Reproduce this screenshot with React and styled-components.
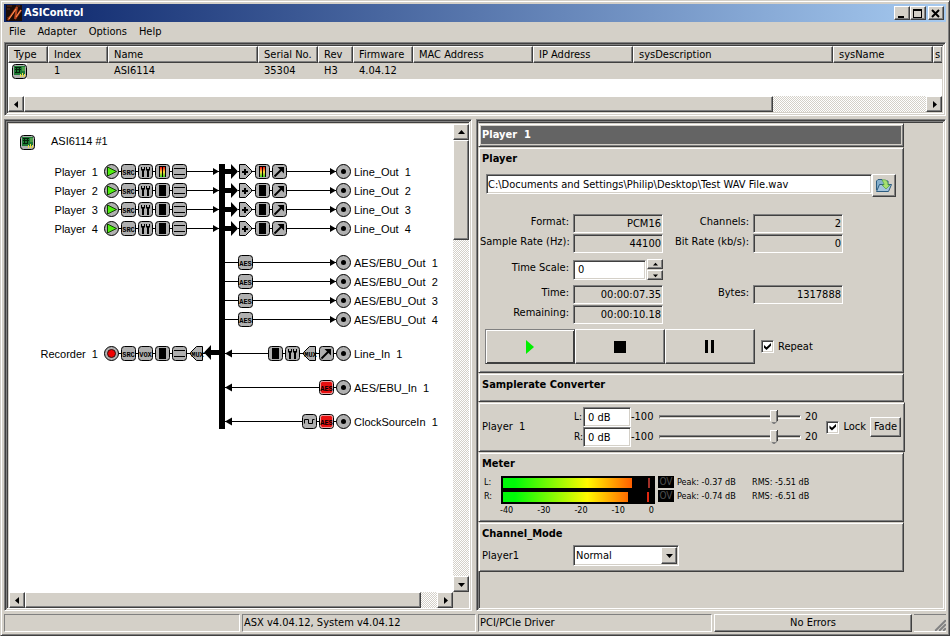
import React, { useState } from 'react';
import styled, { createGlobalStyle, css } from 'styled-components';

const FACE = '#d4d0c8';
const SHADOW = '#808080';
const DARK = '#404040';

const COLUMNS = [
  { title: 'Type', width: 40 },
  { title: 'Index', width: 60, value: '1' },
  { title: 'Name', width: 150, value: 'ASI6114' },
  { title: 'Serial No.', width: 60, value: '35304' },
  { title: 'Rev', width: 35, value: 'H3' },
  { title: 'Firmware', width: 60, value: '4.04.12' },
  { title: 'MAC Address', width: 120 },
  { title: 'IP Address', width: 100 },
  { title: 'sysDescription', width: 200 },
  { title: 'sysName', width: 100 },
  { title: 's' }
];

const PLAYERS = [1, 2, 3, 4];

const METERS = [
  { name: 'L', level: 129, peak: 147, peakText: '-0.37 dB', rmsText: '-5.51 dB', color: '#a03028' },
  { name: 'R', level: 125, peak: 146, peakText: '-0.74 dB', rmsText: '-6.51 dB', color: '#e02810' }
];

/* ---------- icons ---------- */

const Logo = () => (
  <svg width="16" height="16" viewBox="0 0 16 16" aria-hidden="true">
    <rect width="16" height="16" fill="#1c0c08" />
    <path d="M1 1h5M10 1h4M1 4h3M1 13l4-2" stroke="#6a2c18" />
    <path d="M2 15L11 2L9 14L15 5" fill="none" stroke="#b8421c" strokeWidth="2" />
    <path d="M3 14L10 4M10 12L15 5" stroke="#ff9858" />
  </svg>
);

const Card = ({ x = 0, y = 0 }) => (
  <g transform={`translate(${x} ${y})`}>
    <rect x="0.5" y="0.5" width="14" height="14" rx="3" fill="#b0b0b0" stroke="#000" />
    <path d="M2 2h11v9H2z" fill="#1d7a34" />
    <path d="M3 3.500h6M3 5.500h6M3 8.500h5M4.500 3v6M7.500 3v6" stroke="#04200a" />
    <path d="M10 3h3v4h-3z" fill="#4f9f4a" />
    <path d="M8.500 10v3M10.500 9v4M12.500 10v3" stroke="#f0e040" />
  </g>
);

const Tile = () => <rect x="-7" y="-7" width="14" height="14" rx="3" fill="#b0b0b0" stroke="#000" />;

const TileText = ({ children, x = 0 }) => (
  <text x={x} y="3" textAnchor="middle" fontFamily="Liberation Mono, monospace" fontSize="7" fontWeight="bold">
    {children}
  </text>
);

const Block = ({ kind, x, y, live }) => (
  <g transform={`translate(${x} ${y})`}>
    {kind === 'play' && (
      <>
        <circle r="7" fill="#b0b0b0" stroke="#000" />
        <path d="M-4 -4.500L5 0L-4 4.500z" fill="#50f010" stroke="#104000" />
      </>
    )}
    {kind === 'record' && (
      <>
        <circle r="7" fill="#b0b0b0" stroke="#000" />
        <circle r="4" fill="#f00000" stroke="#301010" />
      </>
    )}
    {kind === 'jack' && (
      <>
        <circle r="7" fill="#b0b0b0" stroke="#000" />
        <circle r="2.500" />
      </>
    )}
    {(kind === 'SRC' || kind === 'VOX' || kind === 'AES') && (
      <>
        <Tile />
        {live && (
          <rect x="-6" y="-6" width="12" height="12" rx="2" fill="#e81010" stroke="#e8a0a0" />
        )}
        <TileText>{kind}</TileText>
      </>
    )}
    {kind === 'volume' && (
      <>
        <Tile />
        <path d="M-3.500 -0.500h2v6h-2zM1.500 -0.500h2v6h-2z" />
        <path d="M-4.500 -4.500h1v2h2v-2h1v3l-1 1h-2l-1 -1zM0.500 -4.500h1v2h2v-2h1v3l-1 1h-2l-1 -1z" />
      </>
    )}
    {kind === 'meter' && (
      <>
        <Tile />
        <rect x="-3.500" y="-5.500" width="7" height="11" />
        {live && (
          <>
            <rect x="-2.500" y="-4.500" width="2" height="10" fill="url(#level)" />
            <rect x="0.500" y="-4.500" width="2" height="10" fill="url(#level)" />
          </>
        )}
      </>
    )}
    {kind === 'mode' && (
      <>
        <Tile />
        <path d="M-5.500 -3h11M-5.500 3h11" stroke="#000" />
      </>
    )}
    {kind === 'mixer' && (
      <>
        <path d="M-6 -7h6L6 -1V1L0 7h-6z" fill="#b0b0b0" stroke="#000" />
        <path d="M-3.500 -0.500h6v2h-6zM-1.500 -2.500h2v6h-2z" />
      </>
    )}
    {kind === 'adjust' && (
      <>
        <Tile />
        <path d="M-5 5L2 -2" stroke="#000" strokeWidth="2" />
        <path d="M-2 -4.500h6.500v6.500z" />
      </>
    )}
    {kind === 'mux' && (
      <>
        <path d="M6 -7h-6L-6 -1V1L0 7h6z" fill="#b0b0b0" stroke="#000" />
        <TileText x={1}>MUX</TileText>
      </>
    )}
    {kind === 'clock' && (
      <>
        <Tile />
        <path d="M-5 2V-2H-1V2H3V-2H5" fill="none" stroke="#000" />
      </>
    )}
  </g>
);

const Wire = ({ from, to, y }) => <path d={`M${from} ${y}H${to}`} stroke="#000" />;

const Tip = ({ x, y, left }) => (
  <path d={left ? `M${x} ${y}l7 -4v8z` : `M${x} ${y}l-6 -3.500v7z`} />
);

const Diagram = () => (
  <svg width="445" height="440" viewBox="0 0 445 440" role="img" aria-label="Adapter signal routing">
    <defs>
      <linearGradient id="level" x1="0" y1="0" x2="0" y2="1">
        <stop offset="0" stopColor="#f01010" />
        <stop offset="0.500" stopColor="#ffd840" />
        <stop offset="1" stopColor="#30d020" />
      </linearGradient>
    </defs>
    <Card x={11} y={11} />
    <DiagramText x="42" y="21">ASI6114 #1</DiagramText>
    {PLAYERS.map((n, i) => {
      const y = 47.5 + i * 19;
      return (
        <g key={n}>
          <DiagramText x="89" y={y + 4.5} textAnchor="end">{`Player  ${n}`}</DiagramText>
          <Wire from={102} to={210} y={y} />
          <Tip x={210} y={y} />
          <Block kind="play" x={102.5} y={y} />
          <Block kind="SRC" x={119.5} y={y} />
          <Block kind="volume" x={136.5} y={y} />
          <Block kind="meter" x={153.5} y={y} live={n === 1} />
          <Block kind="mode" x={170.5} y={y} />
          <path d={`M216 ${y - 2.5}h6v-5l7 7.500l-7 7.500v-5h-6z`} />
          <Wire from={229} to={327} y={y} />
          <Tip x={327} y={y} />
          <Block kind="mixer" x={236.5} y={y} />
          <Block kind="meter" x={253.5} y={y} live={n === 1} />
          <Block kind="adjust" x={270.5} y={y} />
          <Block kind="jack" x={334.5} y={y} />
          <DiagramText x="345" y={y + 4.5}>{`Line_Out  ${n}`}</DiagramText>
        </g>
      );
    })}
    {PLAYERS.map((n, i) => {
      const y = 138.5 + i * 19;
      return (
        <g key={n}>
          <Wire from={216} to={327} y={y} />
          <Tip x={327} y={y} />
          <Block kind="AES" x={236.5} y={y} />
          <Block kind="jack" x={334.5} y={y} />
          <DiagramText x="345" y={y + 4.5}>{`AES/EBU_Out  ${n}`}</DiagramText>
        </g>
      );
    })}

    <DiagramText x="89" y="234" textAnchor="end">{'Recorder  1'}</DiagramText>
    <Wire from={102} to={196} y={229.5} />
    <path d="M210 226h-8v-5l-7 7.500l7 7.500v-5h8z" />
    <Block kind="record" x={102.5} y={229.5} />
    <Block kind="SRC" x={119.5} y={229.5} />
    <Block kind="VOX" x={136.5} y={229.5} />
    <Block kind="meter" x={153.5} y={229.5} />
    <Block kind="mode" x={170.5} y={229.5} />
    <Block kind="mux" x={187.5} y={229.5} />

    <Wire from={216} to={334} y={229.5} />
    <Tip left x={216} y={229.5} />
    <Block kind="meter" x={266.5} y={229.5} />
    <Block kind="volume" x={283.5} y={229.5} />
    <Block kind="mux" x={300.5} y={229.5} />
    <Block kind="adjust" x={317.5} y={229.5} />
    <Block kind="jack" x={334.5} y={229.5} />
    <DiagramText x="345" y="234">{'Line_In  1'}</DiagramText>

    <Wire from={216} to={334} y={263.5} />
    <Tip left x={216} y={263.5} />
    <Block kind="AES" x={317.5} y={263.5} live />
    <Block kind="jack" x={334.5} y={263.5} />
    <DiagramText x="345" y="268">{'AES/EBU_In  1'}</DiagramText>

    <Wire from={216} to={334} y={297.5} />
    <Tip left x={216} y={297.5} />
    <Block kind="clock" x={300.5} y={297.5} />
    <Block kind="AES" x={317.5} y={297.5} live />
    <Block kind="jack" x={334.5} y={297.5} />
    <DiagramText x="345" y="302">{'ClockSourceIn  1'}</DiagramText>

    <rect x="210" y="40" width="6" height="265" />
  </svg>
);

const ARROWS = {
  left: 'M5 0v7L1 3.500z',
  right: 'M2 0v7L6 3.500z',
  up: 'M0 5h7L3.500 1z',
  down: 'M0 2h7L3.500 6z'
};

const Arrow = ({ dir, size = 7 }) => (
  <svg width={size} height={size} viewBox="0 0 7 7" aria-hidden="true">
    <path d={ARROWS[dir]} />
  </svg>
);

/* ---------- parts ---------- */

const ScrollBar = ({ vertical, thumb }) => (
  <ScrollTrack $vertical={vertical}>
    <ScrollButton aria-label={vertical ? 'Scroll up' : 'Scroll left'}>
      <Arrow dir={vertical ? 'up' : 'left'} />
    </ScrollButton>
    <ScrollLane $vertical={vertical}>
      <ScrollThumb $size={thumb} />
    </ScrollLane>
    <ScrollButton aria-label={vertical ? 'Scroll down' : 'Scroll right'}>
      <Arrow dir={vertical ? 'down' : 'right'} />
    </ScrollButton>
  </ScrollTrack>
);

const AdapterList = () => (
  <ListFrame>
    <ListBody>
      <Table>
        <colgroup>
          {COLUMNS.map(({ title, width }) => (
            <col key={title} width={width} />
          ))}
        </colgroup>
        <thead>
          <tr>
            {COLUMNS.map(({ title }) => (
              <HeadCell key={title}>{title}</HeadCell>
            ))}
          </tr>
        </thead>
        <tbody>
          <tr>
            {COLUMNS.map(({ title, value }, i) =>
              i === 0 ? (
                <TypeCell key={title}>
                  <svg width="15" height="15" role="img" aria-label="Adapter card">
                    <Card />
                  </svg>
                </TypeCell>
              ) : (
                <Cell key={title}>{value}</Cell>
              )
            )}
          </tr>
        </tbody>
      </Table>
    </ListBody>
    <ScrollBar thumb="83%" />
  </ListFrame>
);

const PlayerSection = () => {
  const [path, setPath] = useState('C:\\Documents and Settings\\Philip\\Desktop\\Test WAV File.wav');
  const [scale, setScale] = useState('0');
  const [repeat, setRepeat] = useState(true);

  return (
    <Section $height={226}>
      <Heading>Player</Heading>
      <FileRow>
        <TextInput aria-label="File" value={path} onChange={(e) => setPath(e.target.value)} />
        <FileButton aria-label="Open file">
          <svg width="18" height="16" viewBox="0 0 18 16" aria-hidden="true">
            <path d="M1.500 12V3L3 1.500h4L8.500 3H13v3" fill="#86b0cc" stroke="#2c5c80" />
            <path d="M1.500 13.500L4.500 6.500H16.500L13.500 13.500z" fill="#a4c4dc" stroke="#2c5c80" />
            <path d="M7 2c4-1 6 1 6 5h2l-4 4l-4-4h2c0-2-1-3-2-5z" fill="#a8e070" stroke="#50a040" strokeWidth="0.700" />
          </svg>
        </FileButton>
      </FileRow>
      <Fields>
        <FieldLabel>Format:</FieldLabel>
        <Value>PCM16</Value>
        <FieldLabel>Channels:</FieldLabel>
        <Value>2</Value>
        <FieldLabel>Sample Rate (Hz):</FieldLabel>
        <Value>44100</Value>
        <FieldLabel>Bit Rate (kb/s):</FieldLabel>
        <Value>0</Value>
        <FieldLabel as="label" htmlFor="scale">Time Scale:</FieldLabel>
        <Spinner>
          <TextInput id="scale" value={scale} onChange={(e) => setScale(e.target.value)} />
          <SpinButtons>
            <SpinButton aria-label="Increase" onClick={() => setScale(String(Number(scale) + 1))}>
              <Arrow dir="up" size={5} />
            </SpinButton>
            <SpinButton aria-label="Decrease" onClick={() => setScale(String(Number(scale) - 1))}>
              <Arrow dir="down" size={5} />
            </SpinButton>
          </SpinButtons>
        </Spinner>
        <span />
        <span />
        <FieldLabel>Time:</FieldLabel>
        <Value>00:00:07.35</Value>
        <FieldLabel>Bytes:</FieldLabel>
        <Value>1317888</Value>
        <FieldLabel>Remaining:</FieldLabel>
        <Value>00:00:10.18</Value>
      </Fields>
      <Transport>
        <TransportButton aria-label="Play" $active>
          <svg width="8" height="14"><path d="M0 0L8 7L0 14z" fill="#00f000" /></svg>
        </TransportButton>
        <TransportButton aria-label="Stop">
          <svg width="12" height="12"><rect width="12" height="12" /></svg>
        </TransportButton>
        <TransportButton aria-label="Pause">
          <svg width="10" height="13"><path d="M0 0h3v13h-3zM6 0h3v13h-3z" /></svg>
        </TransportButton>
        <CheckLabel>
          <Check type="checkbox" checked={repeat} onChange={(e) => setRepeat(e.target.checked)} />
          Repeat
        </CheckLabel>
      </Transport>
    </Section>
  );
};

const VolumeSection = () => {
  const [gains, setGains] = useState({ L: 0, R: 0 });
  const [lock, setLock] = useState(true);

  const change = (channel, value) =>
    setGains(lock ? { L: value, R: value } : { ...gains, [channel]: value });

  return (
    <VolumePanel $height={50}>
      <span>{'Player  1'}</span>
      <div>
        {['L', 'R'].map((channel) => (
          <VolumeRow key={channel}>
            <SmallLabel htmlFor={`gain-${channel}`}>{channel}:</SmallLabel>
            <TextInput id={`gain-${channel}`} value={`${gains[channel]} dB`} readOnly />
            <span>-100</span>
            <Slider
              type="range"
              min="-100"
              max="20"
              aria-label={`${channel} gain`}
              value={gains[channel]}
              onChange={(e) => change(channel, Number(e.target.value))}
            />
            <span>20</span>
          </VolumeRow>
        ))}
      </div>
      <CheckLabel>
        <Check type="checkbox" checked={lock} onChange={(e) => setLock(e.target.checked)} />
        Lock
      </CheckLabel>
      <FadeButton>Fade</FadeButton>
    </VolumePanel>
  );
};

const MeterSection = () => (
  <Section $height={70}>
    <Heading>Meter</Heading>
    <MeterGrid>
      <MeterText>
        {METERS.map(({ name }) => (
          <span key={name}>{name}:</span>
        ))}
      </MeterText>
      <svg width="154" height="28" role="img" aria-label="Level meter">
        <defs>
          <linearGradient id="bar" gradientUnits="userSpaceOnUse" x1="2" y1="0" x2="150" y2="0">
            <stop offset="0.080" stopColor="#00f808" />
            <stop offset="0.570" stopColor="#fff800" />
            <stop offset="0.900" stopColor="#ff5000" />
            <stop offset="1" stopColor="#ff2000" />
          </linearGradient>
        </defs>
        <rect width="154" height="28" />
        {METERS.map(({ name, level, peak, color }, i) => (
          <g key={name}>
            <rect x="2" y={2 + i * 14} width={level} height="10" fill="url(#bar)" />
            <rect x={peak} y={2 + i * 14} width="2" height="10" fill={color} />
          </g>
        ))}
      </svg>
      <MeterText>
        {METERS.map(({ name }) => (
          <Over key={name}>OV</Over>
        ))}
      </MeterText>
      <MeterText>
        {METERS.map(({ name, peakText }) => (
          <span key={name}>Peak: {peakText}</span>
        ))}
      </MeterText>
      <MeterText>
        {METERS.map(({ name, rmsText }) => (
          <span key={name}>RMS: {rmsText}</span>
        ))}
      </MeterText>
    </MeterGrid>
    <Scale>
      {['-40', '-30', '-20', '-10', '0'].map((mark) => (
        <span key={mark}>{mark}</span>
      ))}
    </Scale>
  </Section>
);

const App = () => (
  <>
    <GlobalStyle />
    <Window>
      <TitleBar>
        <Logo />
        <Title>ASIControl</Title>
        <CaptionButton aria-label="Minimize">
          <svg width="10" height="9"><path d="M1 7h6v2H1z" /></svg>
        </CaptionButton>
        <CaptionButton aria-label="Maximize">
          <svg width="10" height="9"><path d="M0 0h9v9H0zM1 2v6h7V2z" fillRule="evenodd" /></svg>
        </CaptionButton>
        <CaptionButton aria-label="Close" $apart>
          <svg width="10" height="9"><path d="M1 1l7 7M8 1L1 8" stroke="#000" strokeWidth="2" /></svg>
        </CaptionButton>
      </TitleBar>
      <MenuBar>
        {['File', 'Adapter', 'Options', 'Help'].map((name) => (
          <MenuItem key={name}>{name}</MenuItem>
        ))}
      </MenuBar>
      <AdapterList />
      <Main>
        <DiagramFrame>
          <Canvas><Diagram /></Canvas>
          <ScrollBar vertical thumb="23%" />
          <ScrollBar thumb="96%" />
        </DiagramFrame>
        <DetailFrame>
          <Sections>
            <Section $height={24}>
              <Banner>{'Player  1'}</Banner>
            </Section>
            <PlayerSection />
            <Section $height={29}>
              <Heading>Samplerate Converter</Heading>
            </Section>
            <VolumeSection />
            <MeterSection />
            <Section $height={50}>
              <Heading>Channel_Mode</Heading>
              <ModeRow>
                <label htmlFor="mode">Player1</label>
                <SelectBox>
                  <Select id="mode" defaultValue="Normal">
                    <option>Normal</option>
                    <option>Swap</option>
                    <option>Left to both</option>
                    <option>Right to both</option>
                  </Select>
                  <SelectArrow><Arrow dir="down" /></SelectArrow>
                </SelectBox>
              </ModeRow>
            </Section>
          </Sections>
        </DetailFrame>
      </Main>
      <StatusBar>
        <StatusPane />
        <StatusPane>ASX v4.04.12, System v4.04.12</StatusPane>
        <StatusPane>PCI/PCIe Driver</StatusPane>
        <StatusButton>No Errors</StatusButton>
        <Grip>
          <svg width="12" height="12" aria-hidden="true">
            <path d="M0 12L12 0M4 12L12 4M8 12L12 8" stroke="#fff" />
            <path d="M1 12L12 1M5 12L12 5M9 12L12 9" stroke="#808080" strokeWidth="2" />
          </svg>
        </Grip>
      </StatusBar>
    </Window>
  </>
);

/* ---------- styles ---------- */

const raised = css`
  border: 1px solid;
  border-color: #fff ${DARK} ${DARK} #fff;
  box-shadow: inset -1px -1px ${SHADOW};
`;

const sunken = css`
  border: 1px solid;
  border-color: ${SHADOW} #fff #fff ${SHADOW};
  box-shadow: inset 1px 1px ${DARK}, inset -1px -1px ${FACE};
`;

const frame = css`
  border: 1px solid;
  border-color: ${SHADOW} #fff #fff ${SHADOW};
  box-shadow: inset 1px 1px ${DARK}, inset -1px -1px ${FACE}, inset 2px 2px ${SHADOW},
    inset -2px -2px #fff, inset 3px 3px ${DARK}, inset -3px -3px ${FACE};
`;

const GlobalStyle = createGlobalStyle`
  * {
    box-sizing: border-box;
  }

  body {
    margin: 0;
    background: ${FACE};
  }

  body, button, input, select {
    font: 11px/14px 'DejaVu Sans Condensed', 'DejaVu Sans', sans-serif;
    color: #000;
  }

  svg {
    display: block;
    flex: none;
  }
`;

const DiagramText = styled.text`
  font-family: 'Liberation Sans', sans-serif;
  font-size: 11px;
  white-space: pre;
`;

const Window = styled.div`
  display: flex;
  flex-direction: column;
  min-height: 100vh;
  padding: 3px;
  background: ${FACE};
  border: 1px solid;
  border-color: ${FACE} ${DARK} ${DARK} ${FACE};
  box-shadow: inset 1px 1px #fff, inset -1px -1px ${SHADOW};
`;

const Button = styled.button.attrs({ type: 'button' })`
  ${raised}
  display: flex;
  align-items: center;
  justify-content: center;
  padding: 0;
  background: ${FACE};
`;

const TitleBar = styled.header`
  display: flex;
  align-items: center;
  height: 18px;
  padding: 0 2px;
  background: linear-gradient(90deg, #0a246a, #a6caf0);
`;

const Title = styled.h1`
  flex: 1;
  margin: 0 0 0 2px;
  font-size: 11px;
  color: #fff;
`;

const CaptionButton = styled(Button)`
  width: 16px;
  height: 14px;
  margin-left: ${(props) => (props.$apart ? 2 : 0)}px;
`;

const MenuBar = styled.nav`
  display: flex;
  height: 20px;
`;

const MenuItem = styled.button.attrs({ type: 'button' })`
  padding: 0 7px 0 5px;
  border: 0;
  background: none;
`;

const ListFrame = styled.section`
  ${frame}
  padding: 3px;
`;

const ListBody = styled.div`
  height: 50px;
  overflow: hidden;
  background: #fff;
`;

const Table = styled.table`
  width: 100%;
  table-layout: fixed;
  border-collapse: separate;
  border-spacing: 0;
`;

const HeadCell = styled.th`
  ${raised}
  height: 17px;
  padding: 0 5px;
  overflow: hidden;
  background: ${FACE};
  font-weight: normal;
  line-height: 15px;
  text-align: left;
  white-space: nowrap;

  &:last-child {
    padding: 0 0 0 1px;
    border-right: 0;
  }
`;

const Cell = styled.td`
  height: 16px;
  padding: 0 6px;
  background: ${FACE};
  line-height: 16px;
  white-space: nowrap;

  &:last-child {
    padding: 0;
  }
`;

const TypeCell = styled.td`
  padding: 0 4px;
  background: linear-gradient(90deg, #fff 19px, ${FACE} 19px);
`;

const ScrollTrack = styled.div`
  display: flex;
  flex-direction: ${(props) => (props.$vertical ? 'column' : 'row')};
  background: repeating-conic-gradient(#fff 0 25%, ${FACE} 0 50%) 0 0 / 2px 2px;
`;

const ScrollButton = styled(Button)`
  flex: none;
  width: 16px;
  height: 16px;
`;

const ScrollLane = styled.div`
  display: flex;
  flex: 1;
  flex-direction: ${(props) => (props.$vertical ? 'column' : 'row')};
`;

const ScrollThumb = styled.div`
  ${raised}
  flex: 0 0 ${(props) => props.$size};
  background: ${FACE};
`;

const Main = styled.main`
  display: grid;
  flex: 1;
  grid-template-columns: 468fr 470fr;
  gap: 4px;
  margin-top: 3px;
`;

const DiagramFrame = styled.section`
  ${frame}
  display: grid;
  grid-template-columns: 1fr 16px;
  grid-template-rows: 1fr 16px;
  min-width: 0;
  padding: 4px 2px 2px 4px;
`;

const Canvas = styled.div`
  overflow: hidden;
  background: #fff;
`;

const DetailFrame = styled.section`
  ${frame}
  min-width: 0;
  padding: 3px 3px 3px 1px;
  background: ${FACE};
`;

const Sections = styled.div`
  max-width: 426px;
`;

const Section = styled.section`
  min-height: ${(props) => props.$height}px;
  padding: 1px;
  background: ${FACE};
  border: 1px solid;
  border-color: ${FACE} ${DARK} ${DARK} ${FACE};
  box-shadow: inset 1px 1px #fff, inset -1px -1px ${SHADOW};
`;

const Banner = styled.h2`
  margin: 1px;
  padding: 0 1px;
  background: #646464;
  color: #fff;
  font-size: 11px;
  line-height: 18px;
  white-space: pre;
`;

const Heading = styled.h3`
  margin: 0;
  padding: 3px 2px;
  font-size: 11px;
  line-height: 14px;
`;

const TextInput = styled.input`
  ${sunken}
  min-width: 0;
  height: 20px;
  padding: 0 4px;
  background: #fff;
  outline: 0;
`;

const FileRow = styled.div`
  display: flex;
  margin: 5px 6px 0 6px;

  ${TextInput} {
    flex: 1;
    padding: 0 1px;
  }
`;

const FileButton = styled(Button)`
  width: 24px;
  height: 23px;
`;

const Fields = styled.div`
  display: grid;
  grid-template-columns: 89px 90px 82px 90px;
  column-gap: 4px;
  grid-template-rows: 20px 20px 31px 20px 20px;
  margin-top: 17px;
`;

const FieldLabel = styled.span`
  align-self: center;
  padding-bottom: 4px;
  text-align: right;
  white-space: nowrap;
`;

const Value = styled.output`
  height: 19px;
  padding: 0 1px;
  border: 1px solid;
  border-color: ${SHADOW} #fff #fff ${SHADOW};
  box-shadow: inset 1px 1px ${DARK};
  line-height: 18px;
  text-align: right;
`;

const Spinner = styled.div`
  display: flex;
  align-items: center;
  gap: 1px;

  ${TextInput} {
    flex: 1;
  }
`;

const SpinButtons = styled.div`
  display: grid;
  gap: 1px;
`;

const SpinButton = styled(Button)`
  width: 16px;
  height: 10px;
`;

const Transport = styled.div`
  display: flex;
  align-items: center;
  margin: 4px 0 0 5px;
`;

const TransportButton = styled(Button)`
  width: 90px;
  height: 35px;
  ${(props) =>
    props.$active &&
    css`
      border-color: ${SHADOW} ${DARK} ${DARK} ${SHADOW};
      box-shadow: inset 1px 1px #fff, inset -1px -1px ${DARK};
    `}
`;

const CheckLabel = styled.label`
  display: flex;
  align-items: center;
  gap: 4px;
`;

const Check = styled.input`
  ${sunken}
  position: relative;
  width: 13px;
  height: 13px;
  margin: 0;
  appearance: none;
  background: #fff;

  &:checked::after {
    content: '';
    position: absolute;
    inset: 2px;
    background: #000;
    clip-path: polygon(0 28%, 36% 60%, 100% 0, 100% 40%, 36% 100%, 0 68%);
  }

  ${Transport} & {
    margin-left: 6px;
  }
`;

const VolumePanel = styled(Section)`
  display: grid;
  grid-template-columns: 92px 1fr auto 31px;
  align-items: center;
  margin-right: -1px;
  padding: 1px 3px;
  white-space: pre;

  ${CheckLabel} {
    margin-right: 4px;
  }
`;

const VolumeRow = styled.div`
  display: grid;
  grid-template-columns: 9px 48px 24px 150px auto;
  align-items: center;
  height: 20px;
`;

const SmallLabel = styled.label`
  font-size: 10px;
`;

const Slider = styled.input`
  width: 142px;
  height: 16px;
  margin: 0 4px;
  appearance: none;
  background: none;

  &::-webkit-slider-runnable-track {
    height: 4px;
    background: ${FACE};
    border: 1px solid;
    border-color: ${SHADOW} #fff #fff ${SHADOW};
    box-shadow: inset 0 1px ${DARK};
  }

  &::-webkit-slider-thumb {
    width: 8px;
    height: 14px;
    margin-top: -6px;
    appearance: none;
    background:
      linear-gradient(#fff, #fff) 0 0 / 7px 1px no-repeat,
      linear-gradient(${SHADOW}, ${SHADOW}) 0 12px / 8px 2px no-repeat,
      linear-gradient(90deg, #fff 1px, ${FACE} 1px 6px, ${SHADOW} 6px 7px, ${DARK} 7px);
    clip-path: polygon(0 0, 100% 0, 100% 75%, 60% 100%, 40% 100%, 0 75%);
  }
`;

const FadeButton = styled(Button)`
  height: 20px;
`;

const MeterGrid = styled.div`
  display: grid;
  grid-template-columns: 14px 154px 16px 72px auto;
  column-gap: 3px;
  justify-content: start;
  margin: 2px 0 0 4px;
`;

const MeterText = styled.div`
  display: grid;
  grid-template-rows: 13px 13px;
  gap: 1px;
  font-size: 9px;
  line-height: 12px;
  white-space: nowrap;
`;

const Over = styled.span`
  height: 12px;
  background: #000;
  color: #505050;
  font-size: 10px;
  text-align: center;
`;

const Scale = styled.div`
  display: flex;
  justify-content: space-between;
  width: 154px;
  margin-left: 20px;
  font-size: 9px;
  line-height: 12px;
`;

const ModeRow = styled.div`
  display: grid;
  grid-template-columns: 91px 106px;
  align-items: center;
  margin-top: 1px;
  padding-left: 2px;
`;

const SelectBox = styled.div`
  ${sunken}
  position: relative;
  height: 21px;
  padding: 1px;
  background: #fff;
`;

const Select = styled.select`
  width: 100%;
  height: 17px;
  padding: 0 1px;
  border: 0;
  appearance: none;
  background: none;
  outline: 0;
`;

const SelectArrow = styled.span`
  ${raised}
  position: absolute;
  top: 1px;
  right: 1px;
  display: flex;
  align-items: center;
  justify-content: center;
  width: 16px;
  height: 17px;
  background: ${FACE};
  pointer-events: none;
`;

const StatusBar = styled.footer`
  display: grid;
  grid-template-columns: 236fr 234fr 234fr 198fr 32px;
  gap: 2px;
  height: 18px;
  margin-top: 3px;
`;

const StatusPane = styled.div`
  padding: 0 1px;
  border: 1px solid;
  border-color: ${SHADOW} #fff #fff ${SHADOW};
  line-height: 16px;
  white-space: nowrap;
`;

const StatusButton = styled(Button)`
  min-width: 0;
`;

const Grip = styled.div`
  display: flex;
  align-items: flex-end;
  justify-content: flex-end;
  border-top: 1px solid ${SHADOW};
  border-bottom: 1px solid #fff;
`;

export default App;
